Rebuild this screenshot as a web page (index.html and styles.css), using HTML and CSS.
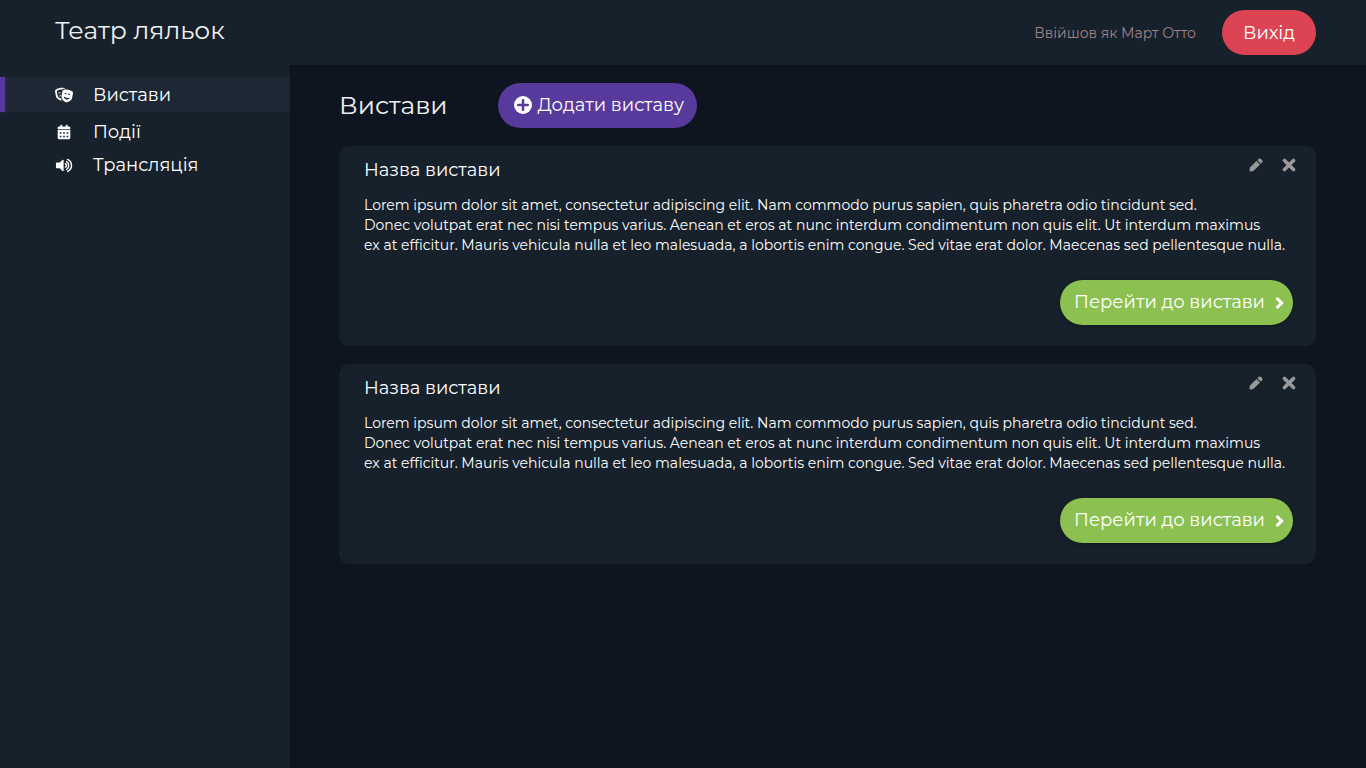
FILE: index.html
```html
<!DOCTYPE html>
<html lang="uk">
<head>
<meta charset="utf-8">
<meta name="viewport" content="width=device-width, initial-scale=1">
<title>Театр ляльок</title>
<link rel="stylesheet" href="styles.css">
</head>
<body>
<svg class="sprite" aria-hidden="true">
  <symbol id="pencil" viewBox="0 0 14 14"><path d="M.9 9.600 7.500 3 11 6.500 4.400 13.100 1.400 13.600Q.4 13.700.5 12.600zM8.300 2.200 9.500 1Q10.900-.1 12.100 1L13 1.900Q14.100 3.100 13 4.500L11.800 5.700z"/></symbol>
  <symbol id="cross" viewBox="0 0 14 14"><path d="M2.500 2.500 11.500 11.500M11.500 2.500 2.500 11.500" fill="none" stroke="currentColor" stroke-width="3.600" stroke-linecap="round"/></symbol>
  <symbol id="chevron" viewBox="0 0 10 14"><path d="M2.600 4 6.600 8 2.600 12" fill="none" stroke="currentColor" stroke-width="3" stroke-linecap="square"/></symbol>
</svg>
<header class="topbar">
  <a class="brand" href="#">Театр ляльок</a>
  <div class="account">
    <span class="user">Ввійшов як Март Отто</span>
    <button class="btn btn-exit" type="button">Вихід</button>
  </div>
</header>
<div class="layout">
  <nav class="sidebar">
    <a class="nav-item active" href="#">
      <svg class="nav-icon" viewBox="0 0 640 512"><path d="M206.86 245.15c-35.88 10.45-59.95 41.2-57.53 74.1 11.4-12.72 28.81-23.7 49.9-30.92l7.63-43.18zM95.81 295L64.08 115.49c-.29-1.62.28-2.62.24-2.65 57.76-32.06 123.12-49.01 189.01-49.01 1.61 0 3.23.17 4.85.19 13.95-13.47 31.73-22.83 51.59-26 18.89-3.02 38.05-4.55 57.18-5.32-9.99-13.95-24.48-24.23-41.77-27C301.27 1.89 277.24 0 253.32 0 176.66 0 101.02 19.42 33.2 57.06 9.03 70.48-3.92 98.48 1.05 126.58l31.73 179.51c14.23 80.52 136.33 142.08 204.45 142.08 3.59 0 6.75-.46 10.01-.8-13.52-17.08-28.94-40.48-39.5-67.58-47.61-12.98-106.06-51.62-111.93-84.79zm97.55-137.46c-.73-4.12-2.23-7.87-4.07-11.4-8.25 8.91-20.67 15.75-35.32 18.32-14.65 2.58-28.67.4-39.48-5.17-.52 3.94-.64 7.98.09 12.1 3.84 21.7 24.58 36.19 46.34 32.37 21.75-3.82 36.28-24.52 32.44-46.22zM606.8 120.9c-88.98-49.38-191.43-67.41-291.98-51.35-27.31 4.36-49.08 26.26-54.04 54.36l-31.73 179.51c-15.39 87.05 95.28 196.27 158.31 207.35 63.03 11.09 204.47-53.79 219.86-140.84l31.73-179.51c4.97-28.11-7.98-56.11-32.15-69.52zm-273.24 96.8c3.84-21.7 24.58-36.19 46.34-32.36 21.76 3.83 36.28 24.52 32.45 46.22-.73 4.12-2.23 7.87-4.07 11.4-8.25-8.91-20.67-15.75-35.32-18.32-14.65-2.58-28.67-.4-39.48 5.17-.53-3.95-.65-7.99.08-12.11zm70.47 198.76c-55.68-9.79-93.52-59.27-89.04-112.9 20.6 25.54 56.21 46.17 99.49 53.78 43.28 7.61 83.82.37 111.93-16.6-14.18 51.94-66.71 85.51-122.38 75.72zm130.3-151.34c-8.25-8.91-20.68-15.75-35.33-18.32-14.65-2.58-28.67-.4-39.48 5.17-.52-3.94-.64-7.98.09-12.1 3.84-21.7 24.58-36.19 46.34-32.37 21.75 3.83 36.28 24.52 32.45 46.22-.73 4.13-2.23 7.88-4.07 11.4z"/></svg>
      Вистави
    </a>
    <a class="nav-item" href="#">
      <svg class="nav-icon" viewBox="-96 -16 640 544"><path fill-rule="evenodd" d="M0 464c0 26.500 21.500 48 48 48h352c26.500 0 48-21.500 48-48V184H0v280zM72 262h58v54H72zM195 262h58v54h-58zM318 262h58v54h-58zM72 390h58v54H72zM195 390h58v54h-58zM318 390h58v54h-58zM400 64h-48V16c0-8.800-7.200-16-16-16h-32c-8.800 0-16 7.200-16 16v48H160V16c0-8.800-7.200-16-16-16h-32c-8.800 0-16 7.200-16 16v48H48C21.500 64 0 85.500 0 112v48h448v-48c0-26.500-21.500-48-48-48z"/></svg>
      Події
    </a>
    <a class="nav-item" href="#">
      <svg class="nav-icon" viewBox="-32 -16 600 512"><path d="M215 71 126 160H24c-13 0-24 11-24 24v144c0 13 11 24 24 24h102l89 89c15 15 41 4 41-17V88c0-21-26-32-41-17z"/><path d="M316 198C362 220 362 292 316 314M352 126C448 172 448 340 352 386M390 56C560 150 560 362 390 456" fill="none" stroke="currentColor" stroke-width="48" stroke-linecap="round"/></svg>
      Трансляція
    </a>
  </nav>
  <main class="content">
    <div class="page-head">
      <h1 class="page-title">Вистави</h1>
      <button class="btn btn-add" type="button">
        <svg class="add-icon" viewBox="0 0 18 18"><circle cx="9" cy="9" r="9"/><path d="M9 4.300v9.400M4.300 9h9.400" fill="none" stroke="#573a9b" stroke-width="2.600" stroke-linecap="round"/></svg>
        Додати виставу
      </button>
    </div>
    <article class="card">
      <header class="card-head">
        <h2 class="card-title">Назва вистави</h2>
        <div class="card-tools">
          <button class="tool" type="button" aria-label="Редагувати"><svg class="tool-icon"><use href="#pencil"/></svg></button>
          <button class="tool" type="button" aria-label="Видалити"><svg class="tool-icon"><use href="#cross"/></svg></button>
        </div>
      </header>
      <p class="card-text">Lorem ipsum dolor sit amet, consectetur adipiscing elit. Nam commodo purus sapien, quis pharetra odio tincidunt sed.<br>Donec volutpat erat nec nisi tempus varius. Aenean et eros at nunc interdum condimentum non quis elit. Ut interdum maximus<br>ex at efficitur. Mauris vehicula nulla et leo malesuada, a lobortis enim congue. Sed vitae erat dolor. Maecenas sed pellentesque nulla.</p>
      <a class="btn btn-go" href="#">Перейти до вистави<svg class="go-icon"><use href="#chevron"/></svg></a>
    </article>
    <article class="card">
      <header class="card-head">
        <h2 class="card-title">Назва вистави</h2>
        <div class="card-tools">
          <button class="tool" type="button" aria-label="Редагувати"><svg class="tool-icon"><use href="#pencil"/></svg></button>
          <button class="tool" type="button" aria-label="Видалити"><svg class="tool-icon"><use href="#cross"/></svg></button>
        </div>
      </header>
      <p class="card-text">Lorem ipsum dolor sit amet, consectetur adipiscing elit. Nam commodo purus sapien, quis pharetra odio tincidunt sed.<br>Donec volutpat erat nec nisi tempus varius. Aenean et eros at nunc interdum condimentum non quis elit. Ut interdum maximus<br>ex at efficitur. Mauris vehicula nulla et leo malesuada, a lobortis enim congue. Sed vitae erat dolor. Maecenas sed pellentesque nulla.</p>
      <a class="btn btn-go" href="#">Перейти до вистави<svg class="go-icon"><use href="#chevron"/></svg></a>
    </article>
  </main>
</div>
</body>
</html>
```
FILE: styles.css
```css
* { box-sizing: border-box; }
body {
  margin: 0;
  min-height: 100vh;
  display: flex;
  flex-direction: column;
  background: #0e1520;
  color: #fff;
  font-family: Montserrat, Inter, "Noto Sans", sans-serif;
  font-size: 18px;
}
a { color: inherit; text-decoration: none; }
button { font: inherit; color: inherit; border: 0; cursor: pointer; }
svg { fill: currentColor; flex: none; }
h1, h2, p { margin: 0; font-weight: 400; }
.sprite { display: none; }
.topbar {
  display: flex;
  align-items: center;
  justify-content: space-between;
  padding: 10px 50px 10px 55px;
  background: #17212b;
  box-shadow: 0 1px 6px rgba(0, 0, 0, .16);
  z-index: 1;
}
.brand { font-size: 25px; line-height: 32px; padding-bottom: 6px; color: #f0f0f0; }
.account { display: flex; align-items: center; gap: 26px; }
.user { font-size: 14px; color: #a08386; }
.btn {
  display: inline-flex;
  align-items: center;
  height: 45px;
  border-radius: 23px;
  white-space: nowrap;
}
.btn-exit { padding: 0 21px; background: #dc4453; }
.layout { display: flex; flex: 1; }
.sidebar {
  flex: none;
  width: 290px;
  padding-top: 12px;
  background: #17212b;
}
.nav-item {
  display: flex;
  align-items: center;
  gap: 20px;
  padding-left: 55px;
  height: 33px;
}
.active {
  height: 35px;
  margin-bottom: 3px;
  padding-left: 0;
  line-height: 20px;
  background: #1e2834;
}
.active::before {
  content: "";
  width: 5px;
  height: 100%;
  margin-right: 30px;
  background: #573a9b;
  box-shadow: 0 0 6px rgba(87, 58, 155, .4);
}
.nav-icon { width: 18px; height: 16px; }
.content { flex: 1; min-width: 0; padding: 18px 50px 18px 49px; }
.page-head { display: flex; align-items: center; gap: 50px; margin-bottom: 18px; }
.page-title { font-size: 25px; line-height: 32px; padding-bottom: 2px; color: #f0f0f0; }
.btn-add { gap: 6px; padding: 0 13px 1px 16px; background: #573a9b; }
.add-icon { width: 18px; height: 18px; }
.card {
  display: flex;
  flex-direction: column;
  padding: 12px 20px 21px 25px;
  margin-bottom: 18px;
  border-radius: 10px;
  background: #17212b;
}
.card-head { display: flex; justify-content: space-between; margin-bottom: 13px; }
.card-title { font-size: 18px; line-height: 24px; }
.card-tools { display: flex; gap: 19px; color: #999; }
.tool { display: flex; padding: 0; height: 14px; background: none; }
.tool-icon { width: 14px; height: 14px; }
.card-text { font-size: 14px; line-height: 20px; margin-bottom: 25px; }
.btn-go {
  align-self: flex-end;
  gap: 10px;
  margin-right: 3px;
  padding: 0 8px 1px 14px;
  background: #8cc152;
  box-shadow: 0 1px 4px rgba(0, 0, 0, .3);
}
.go-icon { width: 10px; height: 14px; }
```
